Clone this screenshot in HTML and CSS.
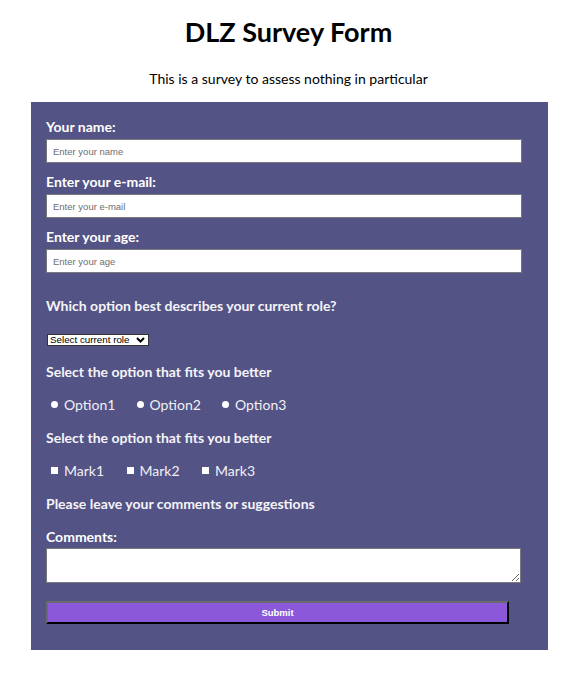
FILE: index.html
```html
<!DOCTYPE html>
<html lang="en">
<head>
<meta charset="utf-8">
<title>DLZ Survey Form</title>
<link rel="stylesheet" href="styles.css">
</head>
<body>
<header class="page-header">
  <h1 class="title">DLZ Survey Form</h1>
  <p class="description">This is a survey to assess nothing in particular</p>
</header>
<form class="survey">
  <label class="field-label" for="name">Your name:</label>
  <input class="text-input" id="name" type="text" placeholder="Enter your name">
  <label class="field-label" for="email">Enter your e-mail:</label>
  <input class="text-input" id="email" type="email" placeholder="Enter your e-mail">
  <label class="field-label" for="age">Enter your age:</label>
  <input class="text-input" id="age" type="number" placeholder="Enter your age">

  <div class="rows">
    <div class="row"><span class="question">Which option best describes your current role?</span></div>
    <div class="row select-row">
      <span class="select-wrap">
        <select class="select">
          <option>Select current role</option>
        </select>
        <svg class="chevron" width="9" height="6" viewBox="0 0 9 6"><path d="M1 1l3.5 3.5L8 1" fill="none" stroke="#000" stroke-width="2"/></svg>
      </span>
    </div>
    <div class="row"><span class="question">Select the option that fits you better</span></div>
    <div class="row choices">
      <label class="choice radio-choice"><input class="radio" type="radio" name="opt">Option1</label>
      <label class="choice radio-choice"><input class="radio" type="radio" name="opt">Option2</label>
      <label class="choice radio-choice"><input class="radio" type="radio" name="opt">Option3</label>
    </div>
    <div class="row"><span class="question">Select the option that fits you better</span></div>
    <div class="row choices">
      <label class="choice check-choice"><input class="check" type="checkbox">Mark1</label>
      <label class="choice check-choice"><input class="check" type="checkbox">Mark2</label>
      <label class="choice check-choice"><input class="check" type="checkbox">Mark3</label>
    </div>
    <div class="row"><span class="question">Please leave your comments or suggestions</span></div>
  </div>

  <label class="field-label comments-label" for="comments">Comments:</label>
  <textarea class="comments" id="comments"></textarea>
  <button class="submit" type="submit">Submit</button>
</form>
</body>
</html>
```

FILE: styles.css
```css
html, body {
  margin: 0;
  padding: 0;
  background: #ffffff;
}

body {
  font-family: Lato, "Open Sans", sans-serif;
  color: #000;
}

.page-header {
  text-align: center;
  padding-top: 14px;
}

.title {
  margin: 0;
  font-size: 27px;
  line-height: 36px;
  font-weight: 700;
}

.description {
  margin: 20px 0 0;
  font-size: 14px;
  line-height: 18px;
}

.survey {
  box-sizing: border-box;
  width: 517px;
  margin: 14px auto 0;
  background: #545386;
  padding: 16px 26px 26px 15px;
  position: relative;
  left: 1px;
}

.field-label {
  display: block;
  color: #ffffff;
  font-weight: 700;
  font-size: 14px;
  line-height: 18px;
  margin: 0 0 3px;
}

.text-input {
  display: block;
  box-sizing: border-box;
  width: 476px;
  height: 24px;
  margin: 0 0 10px;
  border: 1px solid #7a7a7a;
  background: #fff;
  padding: 0 6px;
  font-family: "Liberation Sans", Arial, sans-serif;
  font-size: 9.5px;
  outline: none;
}

.text-input::placeholder {
  color: #6e6e6e;
}

.text-input::-webkit-outer-spin-button,
.text-input::-webkit-inner-spin-button {
  -webkit-appearance: none;
  margin: 0;
}

.rows {
  margin-top: 16px;
  display: flex;
  flex-direction: column;
}

.row {
  height: 33px;
  display: flex;
  align-items: center;
}

.select-row {
  padding-top: 3px;
  box-sizing: border-box;
}

.question {
  color: #f4f4f8;
  font-weight: 700;
  font-size: 14px;
  line-height: 18px;
}

.select-wrap {
  position: relative;
  display: inline-block;
  margin-left: 1px;
}

.select {
  -webkit-appearance: none;
  appearance: none;
  box-sizing: border-box;
  width: 102px;
  height: 12px;
  padding: 0 0 0 2px;
  border: 1px solid #333;
  border-radius: 0;
  background: #fff;
  font-family: "Liberation Sans", Arial, sans-serif;
  font-size: 9.8px;
  line-height: 10px;
  color: #000;
  display: block;
}

.chevron {
  position: absolute;
  right: 4px;
  top: 3px;
  pointer-events: none;
}

.choices {
  padding-left: 5px;
}

.choice {
  display: inline-flex;
  align-items: center;
  color: #f0f0f4;
  font-size: 14px;
  line-height: 18px;
}

.radio-choice {
  width: 85.5px;
}

.check-choice {
  width: 75.5px;
}

.radio {
  -webkit-appearance: none;
  appearance: none;
  width: 7px;
  height: 7px;
  margin: 0 6px 0 0;
  border-radius: 50%;
  background: #fff;
  border: none;
}

.check {
  -webkit-appearance: none;
  appearance: none;
  width: 7px;
  height: 7px;
  margin: 0 6px 0 0;
  border-radius: 0;
  background: #fff;
  border: none;
}

.comments-label {
  margin-top: 8px;
  margin-bottom: 2px;
}

.comments {
  display: block;
  box-sizing: border-box;
  width: 475px;
  height: 35px;
  border: 1px solid #7a7a7a;
  background: #fff;
  margin: 0;
  outline: none;
}

.submit {
  display: block;
  box-sizing: border-box;
  width: 463px;
  height: 23px;
  margin-top: 18px;
  background: #8b58d9;
  color: #fff;
  border: 2px outset #666;
  border-top-color: #6a6a6a;
  border-left-color: #6a6a6a;
  border-right-color: #222;
  border-bottom-color: #222;
  font-family: "Liberation Sans", Arial, sans-serif;
  font-weight: 700;
  font-size: 9.5px;
  padding: 0;
}
```
